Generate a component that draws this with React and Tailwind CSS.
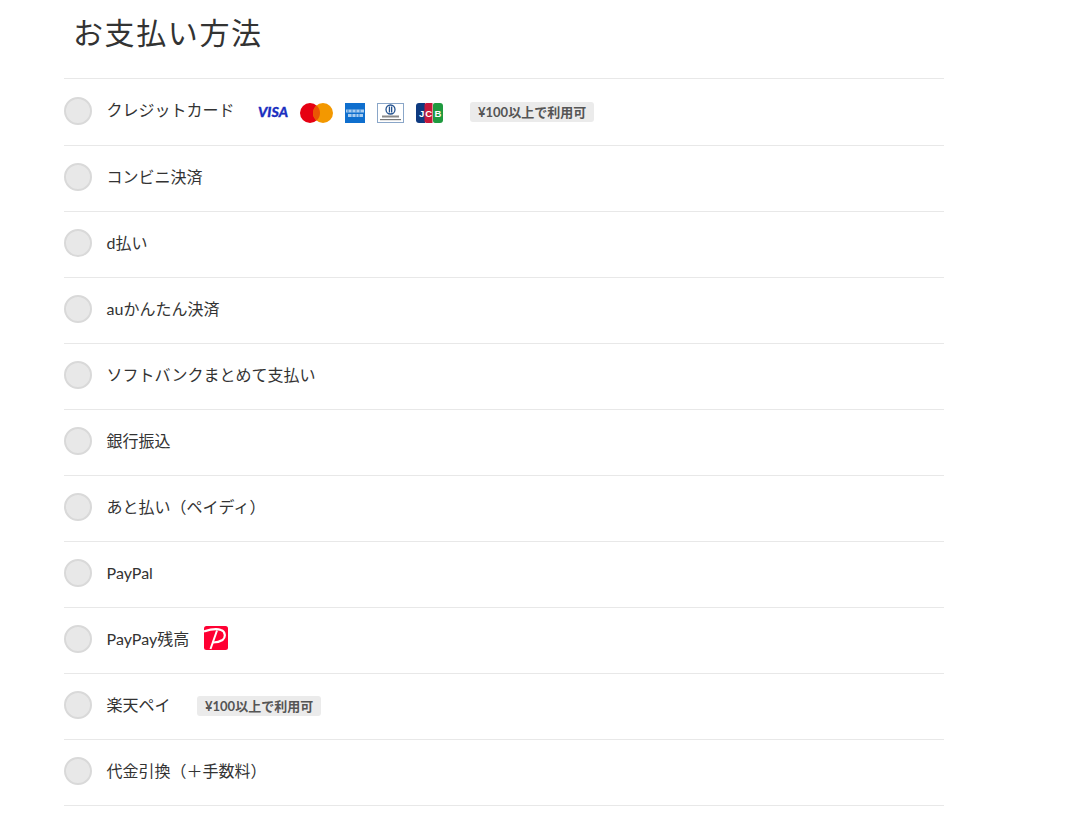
const FONT = "font-['Lato','Noto_Sans_CJK_JP',sans-serif]";

function Visa() {
  return (
    <svg width="31" height="20" viewBox="0 0 31 20" className="block overflow-visible">
      <text x="15" y="14" textAnchor="middle" fontFamily="'Lato',sans-serif" fontStyle="italic" fontWeight="900" fontSize="13.500" fill="#1a2fc0" stroke="#1a2fc0" strokeWidth="0.3" textLength="30" lengthAdjust="spacingAndGlyphs">VISA</text>
    </svg>
  );
}

function Mastercard() {
  return (
    <svg width="33" height="20" viewBox="0 0 33 20" className="block">
      <circle cx="10" cy="10" r="10" fill="#e60012" />
      <circle cx="23" cy="10" r="10" fill="#f39800" />
      <path d="M16.5 2.4a10 10 0 0 1 0 15.2a10 10 0 0 1 0-15.2z" fill="#ea5504" />
    </svg>
  );
}

function Amex() {
  return (
    <svg width="20" height="20" viewBox="0 0 20 20" className="block">
      <rect width="20" height="20" fill="#0f6fce" />
      <rect x="1" y="6.500" width="18" height="3" fill="#a9cdf0" />
      <rect x="3" y="11" width="15" height="3" fill="#a9cdf0" />
      <path d="M3 6.500v3M7 6.500v3M11 6.500v3M15 6.500v3M7 11v3M11 11v3M14 11v3" stroke="#0f6fce" strokeWidth="0.8" />
    </svg>
  );
}

function Diners() {
  return (
    <svg width="27" height="20" viewBox="0 0 27 20" className="block">
      <rect x="0.5" y="0.5" width="26" height="19" fill="#fff" stroke="#8aa6c8" />
      <circle cx="13.500" cy="6.500" r="4.500" fill="#fff" stroke="#24528f" strokeWidth="1.300" />
      <rect x="11.800" y="3.500" width="1.300" height="6" fill="#24528f" />
      <rect x="14" y="3.500" width="1.300" height="6" fill="#24528f" />
      <rect x="5" y="12.500" width="17" height="2" fill="#8a8a8a" />
      <rect x="3" y="16" width="21" height="1.200" fill="#777" />
    </svg>
  );
}

function Jcb() {
  return (
    <svg width="27" height="20" viewBox="0 0 27 20" className="block">
      <path d="M3 0h6v20H3a3 3 0 0 1-3-3V3a3 3 0 0 1 3-3z" fill="#0e3a80" />
      <path d="M10.500 0h6v20h-6a2 2 0 0 1-2-2V2a2 2 0 0 1 2-2z" fill="#c6183b" />
      <path d="M19 0h5a3 3 0 0 1 3 3v14a3 3 0 0 1-3 3h-5a2 2 0 0 1-2-2V2a2 2 0 0 1 2-2z" fill="#1f9a3f" />
      <text x="3" y="13.500" fontFamily="'Liberation Sans',sans-serif" fontWeight="700" fontSize="9.500" fill="#fff">J</text>
      <text x="9.300" y="13.500" fontFamily="'Liberation Sans',sans-serif" fontWeight="700" fontSize="9.500" fill="#fff">C</text>
      <text x="18.500" y="13.500" fontFamily="'Liberation Sans',sans-serif" fontWeight="700" fontSize="9.500" fill="#fff">B</text>
    </svg>
  );
}

function PayPay() {
  return (
    <svg width="24" height="24" viewBox="0 0 24 24" className="block">
      <rect width="24" height="24" rx="2.500" fill="#ff0033" />
      <path d="M0 5.500C6 3.500 13 2.500 17 4C21.500 5.500 22 11.500 18.500 14C15.500 16 12 16.500 9 16.500" fill="none" stroke="#fff" strokeWidth="2.200" />
      <path d="M13 4.500L6.500 23" fill="none" stroke="#fff" strokeWidth="2" />
    </svg>
  );
}

function Badge() {
  return (
    <span className="translate-y-px rounded-[3px] bg-[#ebebeb] px-2 text-[13px] leading-[20px] font-bold text-[#555555] whitespace-nowrap">
      ¥100以上で利用可
    </span>
  );
}

function Row({ label, labelClass = "", children }) {
  return (
    <li className="flex h-[66px] items-center border-b border-[#e8e8e8] pb-[3px]">
      <span className="h-7 w-7 shrink-0 rounded-full border-2 border-[#d9d9d9] bg-[#e8e8e8]" />
      <span className={`ml-[14.6px] text-base leading-6 text-[#333333] whitespace-nowrap ${labelClass}`}>{label}</span>
      {children}
    </li>
  );
}

export default function App() {
  return (
    <div className={`${FONT} h-[824px] overflow-hidden bg-white pl-16`}>
      <div className="w-[880px]">
        <h1 className="h-[78px] pl-[9px] pt-3 text-[30px] leading-10 tracking-[1.6px] font-normal text-[#333333]">お支払い方法</h1>
        <ul className="border-t border-[#e8e8e8] pt-px">
          <Row label="クレジットカード" labelClass="-translate-y-px">
            <div className="ml-[23.4px] flex translate-y-[2px] items-center">
              <Visa />
              <div className="ml-[11px]"><Mastercard /></div>
              <div className="ml-3"><Amex /></div>
              <div className="ml-3"><Diners /></div>
              <div className="ml-3"><Jcb /></div>
            </div>
            <div className="ml-[27px] flex"><Badge /></div>
          </Row>
          <Row label="コンビニ決済" />
          <Row label="d払い" />
          <Row label="auかんたん決済" />
          <Row label="ソフトバンクまとめて支払い" />
          <Row label="銀行振込" />
          <Row label="あと払い（ペイディ）" />
          <Row label="PayPal" />
          <Row label="PayPay残高">
            <div className="ml-[14.4px] -translate-y-px"><PayPay /></div>
          </Row>
          <Row label="楽天ペイ">
            <div className="ml-[26.4px] flex"><Badge /></div>
          </Row>
          <Row label="代金引換（＋手数料）" />
        </ul>
      </div>
    </div>
  );
}
